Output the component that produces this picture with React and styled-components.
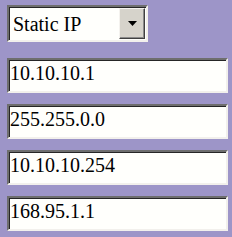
import styled, { createGlobalStyle } from "styled-components";

const Global = createGlobalStyle`
html, body {
    margin: 0;
    padding: 0;
    background: #9d95c8;
}
`;

const serif = `"Liberation Serif", "Times New Roman", serif`;

const Panel = styled.div`
width: 232px;
height: 237px;
box-sizing: border-box;
padding: 5px 4px 0 7px;
display: flex;
flex-direction: column;
gap: 11px;
`;

const Select = styled.div`
width: 141px;
height: 37px;
box-sizing: border-box;
margin-bottom: 5px;
display: flex;
background: #fffffc;
border-style: solid;
border-width: 2px;
border-color: #6e6e6e #f2f0ec #f2f0ec #6e6e6e;
box-shadow: inset 1px 1px 0 #262626;
span {
    flex: 1;
    padding: 5px 0 0 4px;
    font-family: ${serif};
    font-size: 20px;
    line-height: 24px;
    color: #000;
}
`;

const DropButton = styled.div`
width: 24px;
margin: 1px 1px 1px 0;
background: #d6d3cb;
border-style: solid;
border-width: 1px;
border-color: #f4f2ee #404040 #404040 #f4f2ee;
box-shadow: inset -1px -1px 0 #8a8a8a;
display: flex;
align-items: center;
justify-content: center;
`;

const Field = styled.input`
width: 221px;
height: 35px;
box-sizing: border-box;
margin: 0;
padding: 0 0 4px 1px;
background: #fffffc;
border-style: solid;
border-width: 2px;
border-color: #6e6e6e #f2f0ec #f2f0ec #6e6e6e;
box-shadow: inset 1px 1px 0 #262626;
font-family: ${serif};
font-size: 20px;
color: #000;
outline: none;
`;

const values = ["10.10.10.1", "255.255.0.0", "10.10.10.254", "168.95.1.1"];

function App() {
    return (
        <>
            <Global />
            <Panel>
                <Select>
                    <span>Static IP</span>
                    <DropButton>
                        <svg width="9" height="5" viewBox="0 0 9 5">
                            <path d="M0 0H9L4.5 5Z" fill="#000" />
                        </svg>
                    </DropButton>
                </Select>
                {values.map((v) => (
                    <Field key={v} defaultValue={v} readOnly />
                ))}
            </Panel>
        </>
    );
}

export default App;
